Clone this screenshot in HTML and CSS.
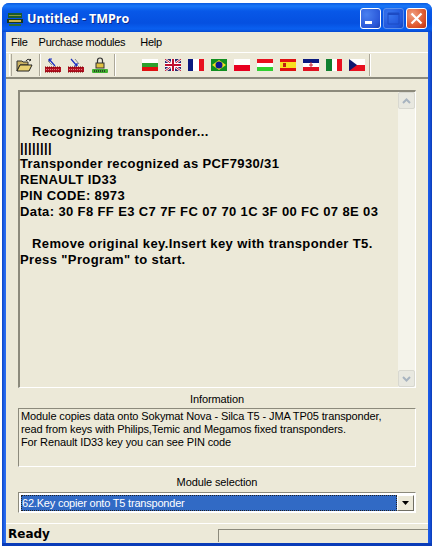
FILE: index.html
```html
<!DOCTYPE html>
<html lang="en">
<head>
  <meta charset="UTF-8" />
  <title>Untitled - TMPro</title>
  <link rel="stylesheet" href="styles.css">
</head>
<body>
  <div class="window">
    <div class="titlebar">
      <svg class="app-icon" width="16" height="16" viewBox="0 0 16 16">
        <rect x="1" y="2" width="14" height="5" fill="#1c5a2c"/>
        <rect x="2" y="4" width="12" height="1" fill="#8a9a40"/>
        <rect x="0" y="8" width="16" height="4" fill="#16381c"/>
        <rect x="2" y="9" width="12" height="2" fill="#c9b24a"/>
        <rect x="2" y="13" width="12" height="2" fill="#2c6a34"/>
      </svg>
      <span class="title-text">Untitled - TMPro</span>
      <div class="title-buttons">
        <div class="tbtn tbtn-blue">
          <svg width="21" height="21" viewBox="0 0 21 21"><rect x="5" y="13" width="7" height="3" fill="#fff"/></svg>
        </div>
        <div class="tbtn tbtn-blue tbtn-off">
          <svg width="21" height="21" viewBox="0 0 21 21"><path d="M5 5h11v11H5z" fill="none" stroke="#2448b8" stroke-width="1"/><path d="M5 6h11" stroke="#2448b8" stroke-width="2"/></svg>
        </div>
        <div class="tbtn tbtn-red">
          <svg width="21" height="21" viewBox="0 0 21 21"><path d="M5.5 5.5l10 10M15.5 5.5l-10 10" stroke="#fff" stroke-width="2.2"/></svg>
        </div>
      </div>
    </div>

    <div class="client">
      <div class="menubar">
        <span class="menu-item">File</span>
        <span class="menu-item">Purchase modules</span>
        <span class="menu-item">Help</span>
      </div>

      <div class="toolbar">
        <div class="gripper"></div>
        <svg class="tool tool-open" width="17" height="15" viewBox="0 0 17 15">
          <path d="M1 3h5l1 1h5v3H4L1 13z" fill="#c8b060" stroke="#333" stroke-width="1"/>
          <path d="M1 13l3-6h12l-3 6z" fill="#e8d070" stroke="#222" stroke-width="1"/>
          <path d="M10 3c1-2 3-2 5-1l-1-1M15 2l-2 1" fill="none" stroke="#222" stroke-width="1"/>
        </svg>
        <div class="tool-sep"></div>
        <svg class="tool tool-chip" width="18" height="17" viewBox="0 0 18 17">
          <path d="M11 9L5 2M5 2v3M5 2h3" fill="none" stroke="#1a2fc0" stroke-width="1.2"/>
          <path d="M8 8L4 4" stroke="#888" stroke-width="1"/>
          <rect x="1" y="10" width="16" height="5" fill="#b01020"/>
          <path d="M2 12.5h14" stroke="#e08080" stroke-width="1" stroke-dasharray="1 1"/>
          <path d="M1 10h16M1 15h16" stroke="#700" stroke-width="1" stroke-dasharray="1 1"/>
        </svg>
        <svg class="tool tool-chip tool-chip-last" width="18" height="17" viewBox="0 0 18 17">
          <path d="M4 2l6 7M10 9V6M10 9H7" fill="none" stroke="#1a2fc0" stroke-width="1.2"/>
          <path d="M8 2l4 5" stroke="#888" stroke-width="1"/>
          <rect x="1" y="10" width="16" height="5" fill="#b01020"/>
          <path d="M2 12.5h14" stroke="#e08080" stroke-width="1" stroke-dasharray="1 1"/>
          <path d="M1 10h16M1 15h16" stroke="#700" stroke-width="1" stroke-dasharray="1 1"/>
        </svg>
        <svg class="tool tool-lock" width="18" height="17" viewBox="0 0 18 17">
          <path d="M6.5 6V3.5a2.5 2.5 0 0 1 5 0V6" fill="none" stroke="#333" stroke-width="1.2"/>
          <rect x="5" y="6" width="8" height="5" fill="#e0c040" stroke="#333" stroke-width="1"/>
          <rect x="1" y="12" width="16" height="4" rx="1" fill="#40b030"/>
          <path d="M3 14h12" stroke="#222" stroke-width="1.4" stroke-dasharray="1 1"/>
        </svg>
        <div class="tool-sep tool-sep-wide"></div>

        <div class="flags">
          <svg class="flag" viewBox="0 0 16 12"><rect width="16" height="4" fill="#fff"/><rect y="4" width="16" height="4" fill="#2ca02c"/><rect y="8" width="16" height="4" fill="#e01010"/></svg>
          <svg class="flag" viewBox="0 0 16 12"><rect width="16" height="12" fill="#2a2a70"/><path d="M0 0l16 12M16 0L0 12" stroke="#fff" stroke-width="2.4"/><path d="M0 0l16 12M16 0L0 12" stroke="#c01030" stroke-width="1"/><path d="M8 0v12M0 6h16" stroke="#fff" stroke-width="4"/><path d="M8 0v12M0 6h16" stroke="#c01030" stroke-width="2"/></svg>
          <svg class="flag" viewBox="0 0 16 12"><rect width="5" height="12" fill="#0a1a80"/><rect x="5" width="6" height="12" fill="#fff"/><rect x="11" width="5" height="12" fill="#e81020"/></svg>
          <svg class="flag" viewBox="0 0 16 12"><rect width="16" height="12" fill="#109020"/><path d="M8 1l7 5-7 5-7-5z" fill="#f0e020"/><circle cx="8" cy="6" r="3.5" fill="#101890"/></svg>
          <svg class="flag" viewBox="0 0 16 12"><rect width="16" height="6" fill="#fff"/><rect y="6" width="16" height="6" fill="#e80020"/></svg>
          <svg class="flag" viewBox="0 0 16 12"><rect width="16" height="4" fill="#e81020"/><rect y="4" width="16" height="4" fill="#fff"/><rect y="8" width="16" height="4" fill="#30d030"/></svg>
          <svg class="flag" viewBox="0 0 16 12"><rect width="16" height="12" fill="#e01010"/><rect y="3" width="16" height="6" fill="#f8e020"/><rect x="3" y="4" width="3" height="4" fill="#c02010"/></svg>
          <svg class="flag" viewBox="0 0 16 12"><rect width="16" height="4" fill="#0a1a80"/><rect y="4" width="16" height="4" fill="#fff"/><rect y="8" width="16" height="4" fill="#e01020"/><path d="M8 3v7M6 6h4" stroke="#c02030" stroke-width="1"/></svg>
          <svg class="flag" viewBox="0 0 16 12"><rect width="6" height="12" fill="#108030"/><rect x="6" width="5" height="12" fill="#fff"/><rect x="11" width="5" height="12" fill="#e81020"/></svg>
          <svg class="flag" viewBox="0 0 16 12"><rect width="16" height="6" fill="#fff"/><rect y="6" width="16" height="6" fill="#e81020"/><path d="M0 0l8 6-8 6z" fill="#101a70"/></svg>
        </div>
        <div class="tool-sep tool-sep-end"></div>
      </div>

      <div class="content">
        <div class="log-box">
          <div class="log">
            <div class="log-line"></div>
            <div class="log-line"></div>
            <div class="log-line log-indent">Recognizing transponder...</div>
            <div class="log-line">||||||||</div>
            <div class="log-line">Transponder recognized as PCF7930/31</div>
            <div class="log-line">RENAULT ID33</div>
            <div class="log-line">PIN CODE: 8973</div>
            <div class="log-line">Data: 30 F8 FF E3 C7 7F FC 07 70 1C 3F 00 FC 07 8E 03</div>
            <div class="log-line"></div>
            <div class="log-line log-indent">Remove original key.Insert key with transponder T5.</div>
            <div class="log-line">Press "Program" to start.</div>
          </div>
          <div class="scrollbar">
            <div class="sb-btn">
              <svg width="9" height="6" viewBox="0 0 9 6"><path d="M1 5l3.5-3.5L8 5" fill="none" stroke="#a8b4c0" stroke-width="2"/></svg>
            </div>
            <div class="sb-btn">
              <svg width="9" height="6" viewBox="0 0 9 6"><path d="M1 1l3.5 3.5L8 1" fill="none" stroke="#a8b4c0" stroke-width="2"/></svg>
            </div>
          </div>
        </div>

        <div class="caption caption-info">Information</div>
        <div class="info-box">
          Module copies data onto Sokymat Nova - Silca T5 - JMA TP05 transponder,<br>
          read from keys with Philips,Temic and Megamos fixed transponders.<br>
          For Renault ID33 key you can see PIN code
        </div>

        <div class="caption caption-module">Module selection</div>
        <div class="combo">
          <div class="combo-value"><span class="combo-text">62.Key copier onto T5 transponder</span></div>
          <div class="combo-arrow">
            <svg width="7" height="4" viewBox="0 0 7 4"><path d="M0 0h7L3.5 4z" fill="#000"/></svg>
          </div>
        </div>
      </div>

      <div class="statusbar">
        <div class="status-text">Ready</div>
        <div class="status-panel"></div>
      </div>
    </div>
  </div>
</body>
</html>
```

FILE: styles.css
```css
body {
  margin: 0;
  background: #fff;
  font-family: "Liberation Sans", Arial, sans-serif;
  font-size: 11px;
  letter-spacing: -0.11px;
  color: #000;
}

.window {
  width: 430px;
  height: 543px;
  margin: 3px 0 0 2px;
  display: flex;
  flex-direction: column;
  background: linear-gradient(to right, #0a45c8 0, #2a6cf0 3px, #1a5ae8 427px, #0a3cb8 430px);
  border-bottom: 3px solid #0a3cb8;
  box-sizing: border-box;
  border-radius: 7px 7px 0 0;
  overflow: hidden;
}

.titlebar {
  height: 29px;
  flex: none;
  display: flex;
  align-items: center;
  box-sizing: border-box;
  padding: 2px 5px 0 5px;
  background: linear-gradient(to bottom, #0a5ae0 0, #1a78f8 3px, #0858e8 8px, #0550e0 20px, #0a60f0 26px, #0548d0 29px);
}

.app-icon {
  margin-right: 4px;
}

.title-text {
  font-family: "Open Sans", sans-serif;
  font-weight: 700;
  font-size: 12.5px;
  letter-spacing: 0;
  color: #fff;
  text-shadow: 1px 1px 0 #0a2a90;
}

.title-buttons {
  margin-left: auto;
  display: flex;
  gap: 2px;
}

.tbtn {
  width: 21px;
  height: 21px;
  border: 1px solid #fff;
  border-radius: 3px;
  box-sizing: border-box;
  display: flex;
  align-items: center;
  justify-content: center;
}

.tbtn svg {
  flex: none;
}

.tbtn-blue {
  background: radial-gradient(circle at 30% 30%, #4a80f0, #2a58d8 70%, #1a40b0);
}

.tbtn-off {
  opacity: 0.75;
  border-color: #7aa0e8;
}

.tbtn-red {
  background: radial-gradient(circle at 30% 30%, #f0a080, #e05a30 60%, #c03010);
}

.client {
  flex: 1;
  margin: 0 4px;
  display: flex;
  flex-direction: column;
  background: #ece9d8;
  min-height: 0;
}

.menubar {
  height: 20px;
  flex: none;
  display: flex;
  align-items: center;
  padding-left: 5px;
  border-bottom: 1px solid #fff;
}

.menu-item {
  margin-right: 15px;
  letter-spacing: -0.28px;
}

.menu-item:first-child {
  margin-right: 11px;
}

.toolbar {
  height: 24px;
  flex: none;
  display: flex;
  align-items: center;
  padding-left: 3px;
  border-bottom: 2px solid #8c8a7c;
  box-sizing: content-box;
}

.gripper {
  width: 1px;
  height: 22px;
  border-left: 1px solid #fff;
  border-right: 1px solid #aca899;
  margin-right: 4px;
}

.tool {
  flex: none;
}

.tool-chip,
.tool-lock {
  margin-right: 5px;
}

.tool-chip-last {
  margin-right: 6px;
}

.tool-sep {
  width: 0;
  height: 22px;
  border-left: 1px solid #aca899;
  border-right: 1px solid #fff;
  margin: 0 3px 0 6px;
}

.tool-sep-wide {
  margin: 0 26px 0 0;
}

.tool-sep-end {
  margin: 0 0 0 4px;
}

.flags {
  display: flex;
  gap: 7px;
  margin-bottom: 1px;
}

.flag {
  width: 16px;
  height: 12px;
  display: block;
}

.content {
  flex: 1;
  padding: 11px 12px 0 12px;
  display: flex;
  flex-direction: column;
}

.log-box {
  height: 298px;
  display: flex;
  border-top: 2px solid #8c8a7c;
  border-left: 2px solid #8c8a7c;
  border-right: 1px solid #fff;
  border-bottom: 1px solid #fff;
  box-sizing: border-box;
}

.log {
  flex: 1;
  font-weight: 700;
  font-size: 13px;
  letter-spacing: 0.38px;
  line-height: 16px;
}

.log-line {
  height: 16px;
  white-space: nowrap;
}

.log-indent {
  padding-left: 12px;
}

.scrollbar {
  width: 17px;
  display: flex;
  flex-direction: column;
  justify-content: space-between;
  background: #f4f3ea;
}

.sb-btn {
  height: 17px;
  display: flex;
  align-items: center;
  justify-content: center;
  background: #e8e8e0;
  border: 1px solid #d8d8d0;
  border-radius: 2px;
  box-sizing: border-box;
}

.caption {
  text-align: center;
}

.caption-info {
  height: 20px;
  line-height: 23px;
}

.caption-module {
  height: 25px;
  line-height: 31px;
}

.info-box {
  height: 59px;
  padding: 1px 0 0 2px;
  border-top: 1px solid #8c8a7c;
  border-left: 1px solid #8c8a7c;
  border-right: 1px solid #fff;
  border-bottom: 1px solid #fff;
  box-sizing: border-box;
  line-height: 13px;
}

.combo {
  height: 21px;
  display: flex;
  padding: 2px 1px 1px 2px;
  border-top: 1px solid #8c8a7c;
  border-left: 1px solid #8c8a7c;
  border-right: 1px solid #fff;
  border-bottom: 1px solid #fff;
  box-sizing: border-box;
  background: #fff;
}

.combo-value {
  flex: 1;
  background: #316ac5;
  outline: 1px dotted #222;
  outline-offset: -1px;
  display: flex;
  align-items: center;
  padding: 0 0 1px 1px;
  letter-spacing: -0.2px;
  color: #fff;
}

.combo-arrow {
  width: 17px;
  display: flex;
  align-items: center;
  justify-content: center;
  background: #ece9d8;
  border: 1px solid;
  border-color: #fff #716f64 #716f64 #fff;
  box-sizing: border-box;
}

.statusbar {
  margin-top: auto;
  height: 20px;
  flex: none;
  display: flex;
  align-items: center;
  border-top: 1px solid #fff;
  box-sizing: border-box;
}

.status-text {
  padding-left: 2px;
  padding-top: 1px;
  font-family: "DejaVu Sans", sans-serif;
  font-weight: 700;
  font-size: 12px;
  letter-spacing: 0;
  width: 210px;
}

.status-panel {
  flex: 1;
  height: 13px;
  margin-top: 4px;
  border-top: 1px solid #8c8a7c;
  border-left: 1px solid #8c8a7c;
  box-sizing: border-box;
}
```
